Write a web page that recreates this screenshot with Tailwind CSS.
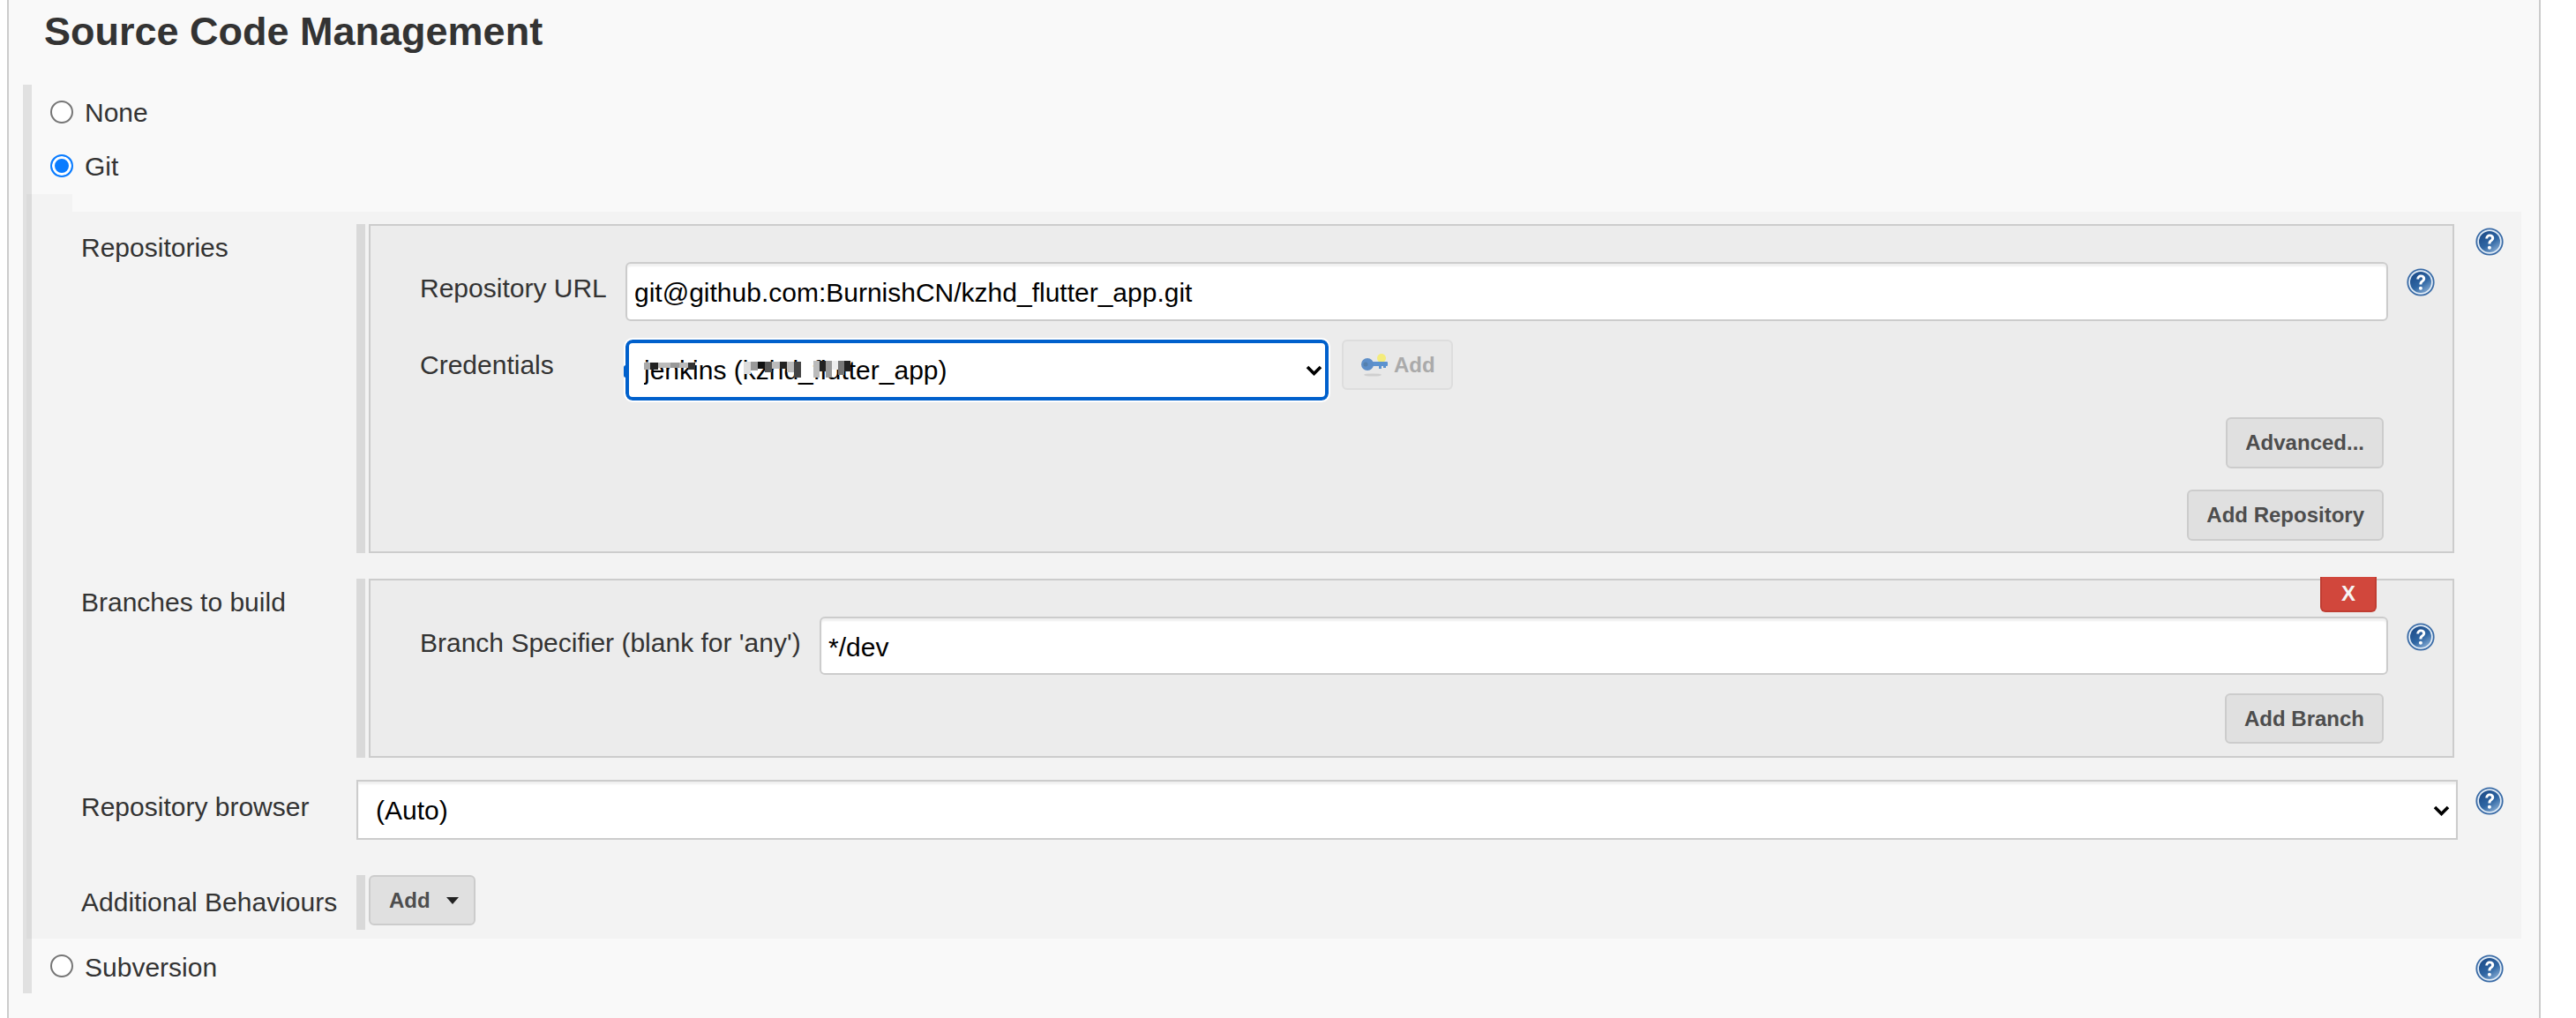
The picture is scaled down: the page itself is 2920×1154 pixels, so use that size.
<!DOCTYPE html>
<html lang="en">
<head>
  <meta charset="UTF-8" />
  <title>Source Code Management</title>
  <script src="https://cdn.jsdelivr.net/npm/@tailwindcss/browser@4"></script>
</head>
<body class="bg-white h-[1154px] overflow-hidden font-['Liberation_Sans',Arial,sans-serif] text-[30px] text-[#333]">
  <svg width="0" height="0" class="absolute">
    <defs>
      <linearGradient id="helpfill" x1="20%" y1="10%" x2="80%" y2="95%">
        <stop offset="0%" stop-color="#1f4f8c" />
        <stop offset="55%" stop-color="#2f66a3" />
        <stop offset="100%" stop-color="#7fa6d0" />
      </linearGradient>
      <symbol id="help" viewBox="0 0 32 32">
        <circle cx="16" cy="16" r="15.6" fill="#3a6ba6" />
        <circle cx="16" cy="16" r="13.8" fill="#e3edf7" />
        <circle cx="16" cy="16" r="12" fill="url(#helpfill)" />
        <path d="M11.3 12.6c.1-3 2.2-5 5-5 2.9 0 4.9 1.8 4.9 4.2 0 1.9-1 2.9-2.3 3.9-1.1.8-1.5 1.3-1.5 2.7h-3c0-2.3.7-3.3 2.1-4.4 1-.8 1.6-1.3 1.6-2.1 0-1-.8-1.7-1.9-1.7-1.2 0-2 .8-2.1 2.4z" fill="#fff" />
        <circle cx="15.9" cy="22.8" r="2" fill="#fff" />
      </symbol>
      <symbol id="chevron" viewBox="0 0 19 12">
        <path d="M2 2l7.5 7.5L17 2" fill="none" stroke="#000" stroke-width="3.6" />
      </symbol>
    </defs>
  </svg>

  <div class="ml-2 w-[2872px] h-[1154px] bg-[#f9f9f9] border-x-2 border-[#ccc]">
    <h2 class="pl-[40px] pt-[12px] h-[96px] text-[45px] leading-[48px] font-bold text-[#333]">Source Code Management</h2>

    <div class="ml-4 h-[1030px] border-l-[10px] border-[#e1e1e1] relative">
      <label class="flex items-center h-[60px] pt-[2px] pl-[21px] gap-[13px]">
        <input type="radio" name="scm" class="appearance-none w-[26px] h-[26px] m-0 rounded-full bg-white border-2 border-[#767676]" />
        <span>None</span>
      </label>
      <label class="flex items-center h-[64px] pl-[21px] gap-[13px]">
        <input type="radio" name="scm" checked class="appearance-none w-[26px] h-[26px] m-0 rounded-full border-2 border-[#0a7cff] bg-[#0a7cff] shadow-[inset_0_0_0_3px_#fff]" />
        <span>Git</span>
      </label>

      <!-- git block with the notch under the radio, see-through so the bar darkens -->
      <div class="-ml-[6px] w-[2828px]">
        <div class="w-[52px] h-[20px] bg-black/[0.025]"></div>
        <div class="bg-black/[0.025] h-[824px] pt-[14px] pl-[62px] relative">

          <div class="flex">
            <div class="w-[312px] pt-[4px] leading-[46px]">Repositories</div>
            <div class="w-[2378px] h-[373px] flex">
              <div class="w-[10px] bg-[#d9d9d9] shrink-0"></div>
              <div class="ml-1 w-[2364px] bg-[#ececec] border-2 border-[#ccc] pl-[56px] pt-[41px]">
                <div class="flex items-start">
                  <div class="w-[233px] pt-[7px] leading-[46px]">Repository URL</div>
                  <input value="git@github.com:BurnishCN/kzhd_flutter_app.git" class="w-[1998px] h-[67px] px-[8px] pt-[3px] bg-white text-black rounded-md border-2 border-[#ccc] shadow-[inset_0_3px_2px_#f0f0f0]" />
                  <svg class="w-8 h-8 ml-[21px] mt-[7px] shrink-0"><use href="#help" /></svg>
                </div>
                <div class="flex items-start mt-[21px]">
                  <div class="w-[233px] pt-[6px] leading-[46px]">Credentials</div>
                  <div class="relative">
                    <select class="appearance-none block w-[797px] h-[69px] pl-[17px] bg-white text-black rounded-lg border-4 border-[#0060cc] outline-2 outline-white">
                      <option>jenkins (kzhd_flutter_app)</option>
                    </select>
                    <svg class="absolute left-[771px] top-[29px] w-[19px] h-[12px] pointer-events-none"><use href="#chevron" /></svg>
                    <!-- blurred part of the credential name -->
                    <div class="absolute left-[21px] top-[26px] flex pointer-events-none">
                      <span class="w-[7px] h-[8px] bg-[#aaa]"></span><span class="w-[9px] h-[8px] bg-[#222]"></span><span class="w-[14px] h-[6px] bg-[#bbb]"></span><span class="w-[10px] h-[6px] bg-[#999]"></span><span class="w-[10px] h-[6px] bg-[#bbb]"></span><span class="w-[8px] h-[8px] bg-[#333]"></span>
                    </div>
                    <div class="absolute left-[134px] top-[25px] flex pointer-events-none">
                      <span class="w-[8px] h-[14px] bg-[#ddd]"></span><span class="w-[8px] h-[10px] bg-[#999]"></span><span class="w-[8px] h-[8px] bg-[#111]"></span><span class="w-[8px] h-[12px] bg-[#555]"></span><span class="w-[9px] h-[8px] bg-[#bbb]"></span><span class="w-[8px] h-[8px] bg-[#222]"></span><span class="w-[8px] h-[12px] bg-[#bbb]"></span><span class="w-[8px] h-[18px] bg-[#444]"></span>
                    </div>
                    <div class="absolute left-[213px] top-[24px] flex pointer-events-none">
                      <span class="w-[7px] h-[19px] bg-[#bbb]"></span><span class="w-[7px] h-[12px] bg-[#222]"></span><span class="w-[7px] h-[19px] bg-[#999]"></span><span class="w-[7px] h-[10px] bg-[#eee]"></span><span class="w-[7px] h-[16px] bg-[#777]"></span><span class="w-[7px] h-[12px] bg-[#222]"></span>
                    </div>
                    <span class="absolute -left-[2px] top-[29px] w-[5px] h-[14px] rounded-full bg-[#0060cc]"></span>
                  </div>
                  <div class="ml-[15px] w-[126px] h-[57px] rounded-md border-2 border-[#ddd] bg-[#e8e8e8] flex items-center pl-[20px] gap-[7px] text-[24px] font-bold text-[#aaa]">
                    <svg viewBox="0 0 30 30" class="w-[30px] h-[30px] shrink-0 blur-[0.5px]">
                      <circle cx="23" cy="7" r="5" fill="#f4ec7c" />
                      <ellipse cx="13" cy="26" rx="10" ry="1.6" fill="#cfcfcf" />
                      <rect x="8" y="11" width="22" height="5" rx="1" fill="#5d93d0" />
                      <rect x="20" y="15" width="3" height="4" fill="#5d93d0" />
                      <rect x="25" y="15" width="3" height="3" fill="#5d93d0" />
                      <circle cx="7" cy="14" r="7" fill="#5d8ec8" />
                      <circle cx="5" cy="14" r="2.5" fill="#5580ad" />
                    </svg>
                    <span>Add</span>
                  </div>
                </div>
                <div class="flex justify-end w-[2226px] mt-[19px]">
                  <button class="h-[58px] px-[20px] rounded-md border-2 border-[#ccc] bg-[#e0e0e0] text-[24px] font-bold text-[#4d4d4d]">Advanced...</button>
                </div>
                <div class="flex justify-end w-[2226px] mt-[24px]">
                  <button class="h-[58px] px-[20px] rounded-md border-2 border-[#ccc] bg-[#e0e0e0] text-[24px] font-bold text-[#4d4d4d]">Add Repository</button>
                </div>
              </div>
            </div>
          </div>

          <div class="flex mt-[29px]">
            <div class="w-[312px] pt-[4px] leading-[46px]">Branches to build</div>
            <div class="w-[2378px] h-[203px] flex">
              <div class="w-[10px] bg-[#d9d9d9] shrink-0"></div>
              <div class="ml-1 w-[2364px] bg-[#ececec] border-2 border-[#ccc] pl-[56px] pt-[41px] relative">
                <button class="absolute right-[86px] -top-[4px] w-[64px] h-[40px] rounded-b-md border-2 border-t-0 border-[#c03d32] bg-[#d1473c] text-[24px] font-bold text-[#f5f5f5]">X</button>
                <div class="flex items-start">
                  <div class="w-[453px] pt-[7px] leading-[46px] whitespace-nowrap">Branch Specifier (blank for 'any')</div>
                  <input value="*/dev" class="w-[1778px] h-[66px] px-[8px] pt-[3px] bg-white text-black rounded-md border-2 border-[#ccc] shadow-[inset_0_3px_2px_#f0f0f0]" />
                  <svg class="w-8 h-8 ml-[21px] mt-[7px] shrink-0"><use href="#help" /></svg>
                </div>
                <div class="flex justify-end w-[2226px] mt-[21px]">
                  <button class="h-[57px] px-[20px] rounded-md border-2 border-[#ccc] bg-[#e0e0e0] text-[24px] font-bold text-[#4d4d4d]">Add Branch</button>
                </div>
              </div>
            </div>
          </div>

          <div class="flex mt-[25px]">
            <div class="w-[312px] pt-[8px] leading-[46px]">Repository browser</div>
            <div class="relative">
              <select class="appearance-none block w-[2382px] h-[68px] pl-[20px] bg-white text-black border-2 border-[#ccc] rounded-none shadow-[inset_0_3px_2px_#f0f0f0]">
                <option>(Auto)</option>
              </select>
              <svg class="absolute left-[2354px] top-[29px] w-[19px] h-[12px] pointer-events-none"><use href="#chevron" /></svg>
            </div>
            <svg class="w-8 h-8 ml-[20px] mt-[8px] shrink-0"><use href="#help" /></svg>
          </div>

          <div class="flex mt-[40px]">
            <div class="w-[312px] pt-[8px] leading-[46px]">Additional Behaviours</div>
            <div class="w-[10px] h-[62px] bg-[#d9d9d9]"></div>
            <button class="ml-1 w-[121px] h-[57px] rounded-md border-2 border-[#ccc] bg-[#e0e0e0] text-[24px] font-bold text-[#4d4d4d] flex items-center pl-[21px] gap-[18px]">
              Add
              <span class="w-0 h-0 border-x-[7px] border-x-transparent border-t-[8px] border-t-[#222]"></span>
            </button>
          </div>
        </div>
      </div>

      <label class="flex items-center h-[62px] pl-[21px] gap-[13px] relative">
        <input type="radio" name="scm" class="appearance-none w-[26px] h-[26px] m-0 rounded-full bg-white border-2 border-[#767676]" />
        <span class="pt-[2px]">Subversion</span>
        <svg class="absolute left-[2770px] top-[18px] w-8 h-8"><use href="#help" /></svg>
      </label>

      <svg class="absolute left-[2770px] top-[162px] w-8 h-8"><use href="#help" /></svg>
    </div>
  </div>
</body>
</html>
